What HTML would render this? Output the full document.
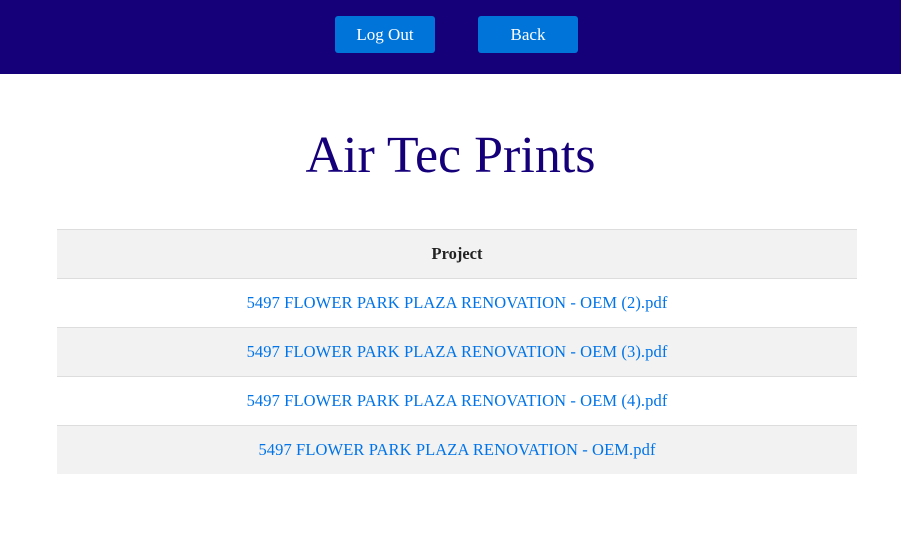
<!DOCTYPE html>
<html><head><meta charset="utf-8"><style>
body{margin:0;background:#fff;font-family:"Liberation Serif","DejaVu Serif",serif;}
.hdr{height:74px;background:#16007a;position:relative;}
.btn{position:absolute;top:16px;width:100px;height:37px;background:#0074d9;border-radius:3px;color:#fff;font-size:17px;text-align:center;line-height:37px;}
h1{margin:0;position:absolute;top:124px;left:0;width:901px;text-align:center;font-weight:normal;color:#16007a;font-size:52px;line-height:64px;}
table{position:absolute;top:229px;left:57px;width:800px;border-collapse:collapse;}
td,th{height:48px;border-top:1px solid #ddd;text-align:center;font-size:16.5px;padding:0;}
th{color:#222;font-weight:bold;}
tr:nth-child(odd){background:#f2f2f2;}
td{color:#0074e8;letter-spacing:0.1px;}
</style></head><body>
<div class="hdr"><div class="btn" style="left:335px">Log Out</div><div class="btn" style="left:478px">Back</div></div>
<h1>Air Tec Prints</h1>
<table>
<tr><th>Project</th></tr>
<tr><td>5497 FLOWER PARK PLAZA RENOVATION - OEM (2).pdf</td></tr>
<tr><td>5497 FLOWER PARK PLAZA RENOVATION - OEM (3).pdf</td></tr>
<tr><td>5497 FLOWER PARK PLAZA RENOVATION - OEM (4).pdf</td></tr>
<tr><td>5497 FLOWER PARK PLAZA RENOVATION - OEM.pdf</td></tr>
</table>
</body></html>
